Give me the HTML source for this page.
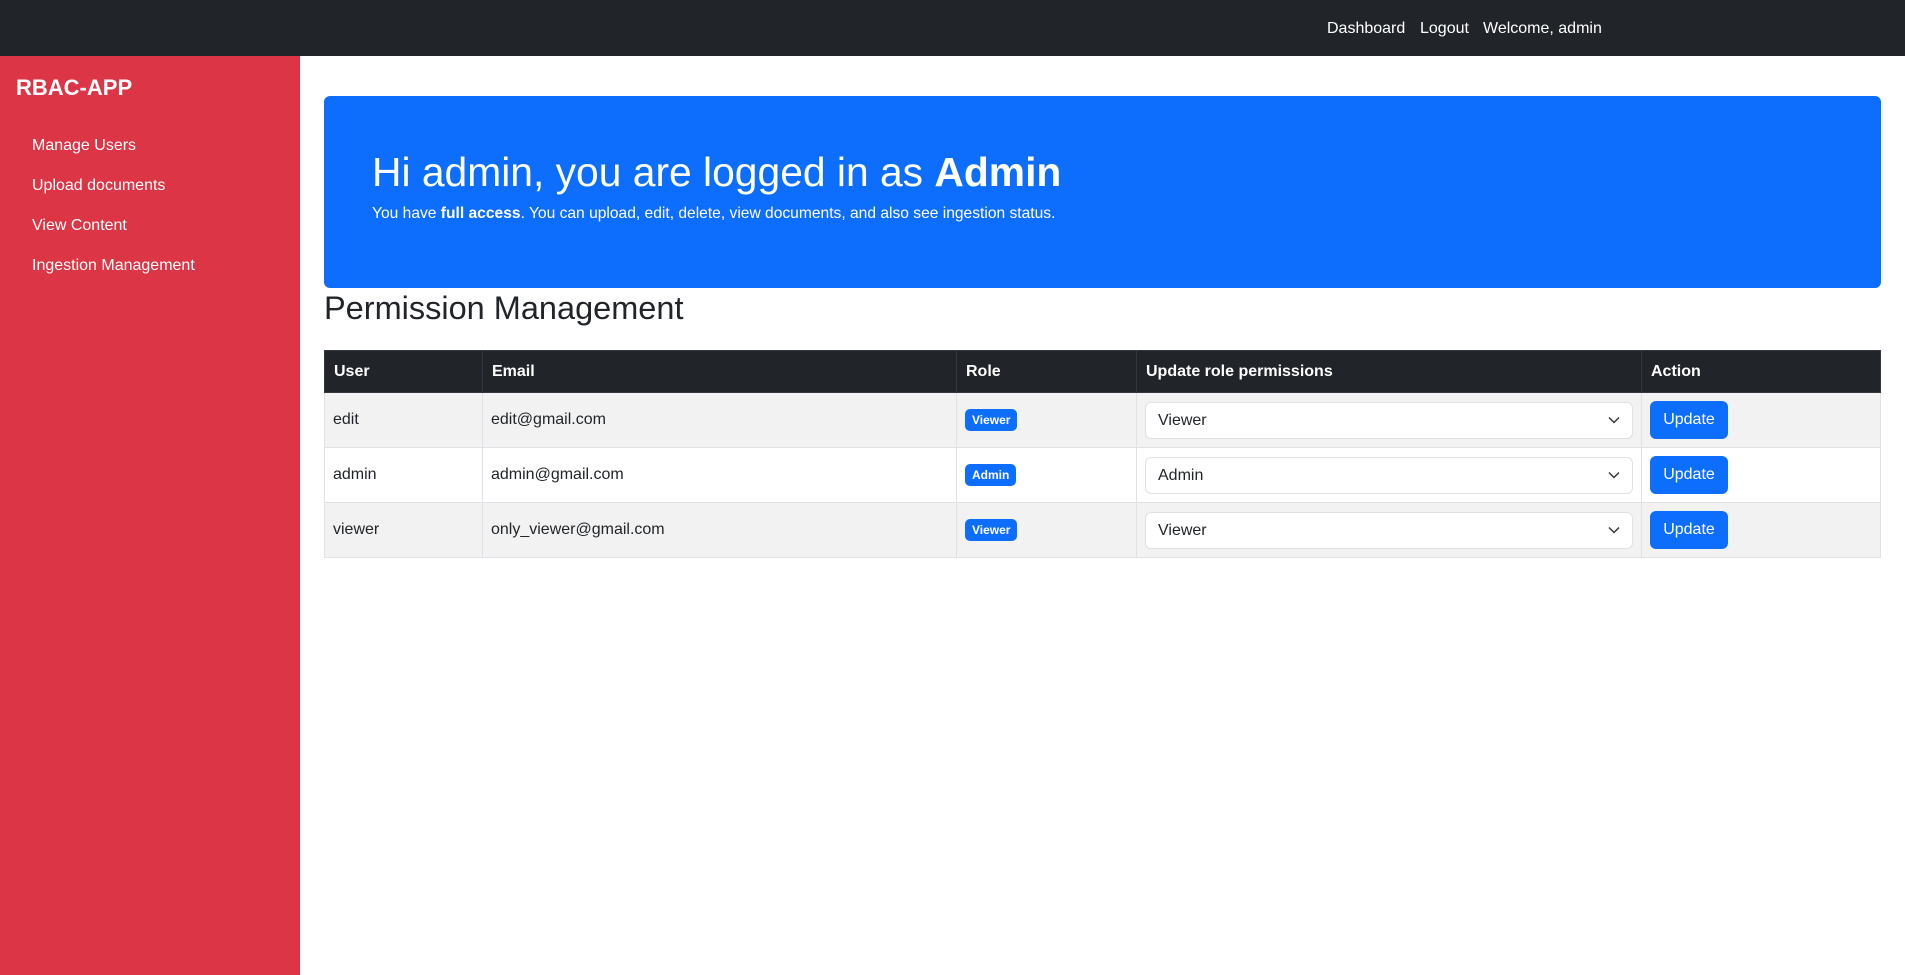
<!DOCTYPE html>
<html><head><meta charset="utf-8"><style>
*{box-sizing:border-box;margin:0;padding:0}
body{width:1905px;height:975px;font-family:"Liberation Sans",sans-serif;color:#212529;background:#fff;position:relative;overflow:hidden;font-size:16px}
.nav{position:absolute;left:0;top:0;width:1905px;height:56px;background:#212529}
.nav span{position:absolute;top:20px;color:#fff;font-size:16px}
.side{position:absolute;left:0;top:56px;width:300px;height:919px;background:#dc3545;color:#fff}
.side .brand{position:absolute;left:16px;top:19px;font-size:22px;font-weight:bold}
.side a{position:absolute;left:32px;color:#fff;font-size:16px;text-decoration:none}
.hero{position:absolute;left:324px;top:96px;width:1557px;height:192px;background:#0d6efd;border-radius:6px;color:#fff}
.hero h1{position:absolute;left:48px;top:53px;font-size:40.8px;font-weight:500;white-space:nowrap}
.hero p{position:absolute;left:48px;top:109px;font-size:15.6px;white-space:nowrap}
h2{position:absolute;left:324px;top:290px;font-size:32.5px;font-weight:500}
table{position:absolute;left:324px;top:350px;width:1557px;border-collapse:collapse}
th{background:#212529;color:#fff;text-align:left;font-weight:bold;height:42px;padding:0 9px;border:1px solid #32383e;font-size:16px}
td{height:55px;padding:0 8px;border:1px solid #dee2e6;font-size:16px}
tr.o td{background:#f2f2f2}
.badge{display:inline-block;background:#0d6efd;color:#fff;font-size:12px;font-weight:bold;padding:4px 7px;border-radius:5px}
.sel{position:relative;width:488px;height:37px;background:#fff;border:1px solid #dee2e6;border-radius:6px;padding:9px 12px}
.sel svg{position:absolute;right:12px;top:13px}
.btn{display:inline-block;background:#0d6efd;color:#fff;width:78px;height:38px;line-height:38px;text-align:center;border-radius:6px;font-size:16px}
</style></head><body>
<div class="nav"><span style="left:1327px">Dashboard</span><span style="left:1420px">Logout</span><span style="left:1483px">Welcome, admin</span></div>
<div class="side"><div class="brand">RBAC-APP</div>
<a style="top:81px">Manage Users</a><a style="top:121px">Upload documents</a><a style="top:161px">View Content</a><a style="top:201px">Ingestion Management</a></div>
<div class="hero"><h1>Hi admin, you are logged in as <b>Admin</b></h1>
<p>You have <b>full access</b>. You can upload, edit, delete, view documents, and also see ingestion status.</p></div>
<h2>Permission Management</h2>
<table>
<colgroup><col style="width:158px"><col style="width:474px"><col style="width:180px"><col style="width:504px"><col></colgroup>
<tr><th>User</th><th>Email</th><th>Role</th><th>Update role permissions</th><th>Action</th></tr>
<tr class="o"><td>edit</td><td>edit@gmail.com</td><td><span class="badge">Viewer</span></td><td><div class="sel">Viewer<svg width="12" height="8" viewBox="0 0 12 8"><path d="M1 1.5l5 5 5-5" fill="none" stroke="#343a40" stroke-width="1.5"/></svg></div></td><td><span class="btn">Update</span></td></tr>
<tr><td>admin</td><td>admin@gmail.com</td><td><span class="badge">Admin</span></td><td><div class="sel">Admin<svg width="12" height="8" viewBox="0 0 12 8"><path d="M1 1.5l5 5 5-5" fill="none" stroke="#343a40" stroke-width="1.5"/></svg></div></td><td><span class="btn">Update</span></td></tr>
<tr class="o"><td>viewer</td><td>only_viewer@gmail.com</td><td><span class="badge">Viewer</span></td><td><div class="sel">Viewer<svg width="12" height="8" viewBox="0 0 12 8"><path d="M1 1.5l5 5 5-5" fill="none" stroke="#343a40" stroke-width="1.5"/></svg></div></td><td><span class="btn">Update</span></td></tr>
</table>
</body></html>
